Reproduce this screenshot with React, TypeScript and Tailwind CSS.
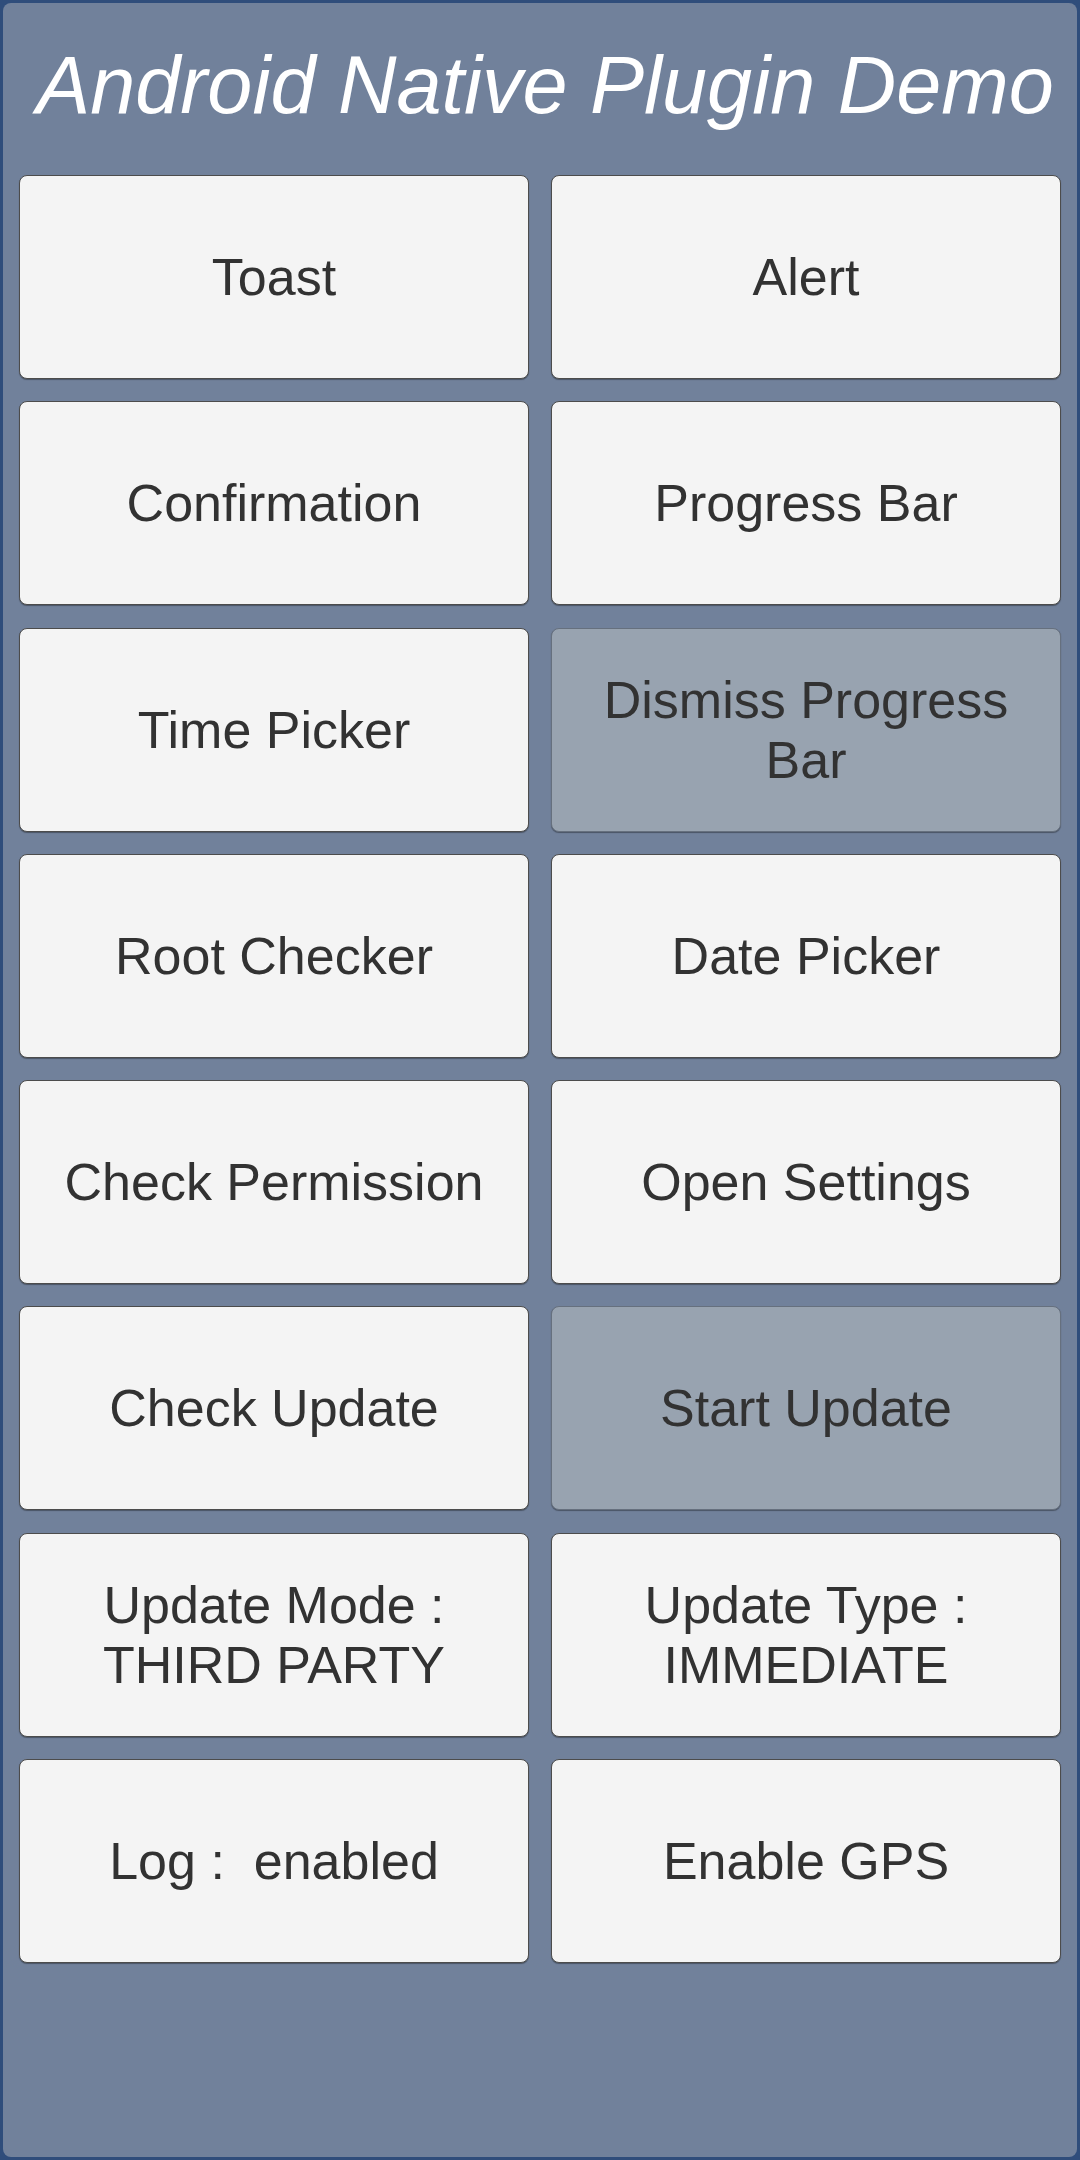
import React from "react";

interface DemoButton {
  label: string[];
  disabled?: boolean;
}

const BUTTONS: DemoButton[] = [
  { label: ["Toast"] },
  { label: ["Alert"] },
  { label: ["Confirmation"] },
  { label: ["Progress Bar"] },
  { label: ["Time Picker"] },
  { label: ["Dismiss Progress", "Bar"], disabled: true },
  { label: ["Root Checker"] },
  { label: ["Date Picker"] },
  { label: ["Check Permission"] },
  { label: ["Open Settings"] },
  { label: ["Check Update"] },
  { label: ["Start Update"], disabled: true },
  { label: ["Update Mode :", "THIRD PARTY"] },
  { label: ["Update Type :", "IMMEDIATE"] },
  { label: ["Log :  enabled"] },
  { label: ["Enable GPS"] },
];

const App: React.FC = () => {
  return (
    <div
      className="w-[1080px] h-[2160px] bg-[#2f4d7b] p-[3px]"
      style={{ fontFamily: '"Liberation Sans", Arial, sans-serif' }}
    >
      {/* 패널 */}
      <div className="h-full rounded-[8px] bg-[#71819b] px-[16px]">
        <div className="h-[172px] pt-[37px] pl-[10px]">
          <h1 className="text-center text-[81px] leading-[91px] italic text-white whitespace-nowrap">
            Android Native Plugin Demo
          </h1>
        </div>

        {/* 버튼 그리드 */}
        <div className="grid grid-cols-2 gap-x-[22px] gap-y-[22.3px]">
          {BUTTONS.map((btn) => (
            <button
              key={btn.label.join(" ")}
              type="button"
              className={`h-[204px] flex flex-col items-center justify-center rounded-[8px] border border-[#4c4c4c] shadow-[0_1px_1px_rgba(0,0,0,0.35)] text-[52px] leading-[60px] text-[#323232] ${
                btn.disabled ? "bg-[#98a3b0] border-[#66707e]" : "bg-[#f4f4f4]"
              }`}
            >
              {btn.label.map((line) => (
                <span key={line} className="whitespace-pre">
                  {line}
                </span>
              ))}
            </button>
          ))}
        </div>
      </div>
    </div>
  );
};

export default App;
